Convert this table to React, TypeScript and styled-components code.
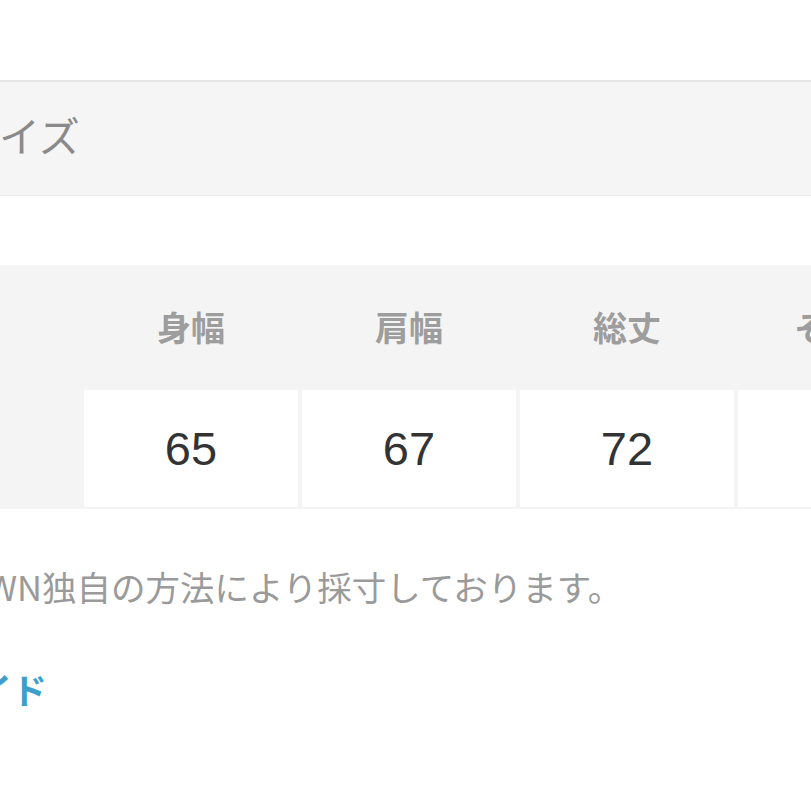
import React from "react"
import styled, { createGlobalStyle } from "styled-components"

const GlobalStyle = createGlobalStyle`
  html, body {
    margin: 0;
    padding: 0;
    background: #ffffff;
    overflow: hidden;
  }
  body {
    font-family: "Noto Sans CJK JP", "Noto Sans", sans-serif;
  }
`

const Page = styled.div`
  width: 1200px;
  margin-left: -134px;
`

const TitleBar = styled.div`
  margin-top: 80px;
  height: 116px;
  display: flex;
  align-items: center;
  padding: 0 0 10px 92px;
  box-sizing: border-box;
  background: #f5f5f5;
  border-top: 2px solid #e6e6e6;
  border-bottom: 1px solid #ededed;
`

const Title = styled.h2`
  margin: 0;
  font-size: 41px;
  font-weight: 400;
  color: #8a8a8a;
`

const SizeTable = styled.div`
  margin-top: 69px;
  display: grid;
  grid-template-columns: repeat(5, 214px);
  grid-template-rows: 123px 117px;
  column-gap: 4px;
  row-gap: 2px;
  padding-bottom: 2px;
  width: max-content;
  background: #f4f4f4;
`

const HeadCell = styled.div`
  display: flex;
  align-items: center;
  justify-content: center;
  font-size: 34px;
  font-weight: 700;
  color: #9d9d9d;
`

const Cell = styled.div<{ $label?: boolean }>`
  display: flex;
  align-items: center;
  justify-content: center;
  background: ${(p) => (p.$label ? "#f4f4f4" : "#ffffff")};
  font-family: "Liberation Sans", Arial, sans-serif;
  font-size: 47px;
  color: #333333;
`

const Note = styled.p`
  margin: 52px 0 0 -14px;
  font-size: 34.5px;
  line-height: 1.5;
  color: #9a9a9a;
`

const GuideLink = styled.a`
  display: block;
  margin: 50px 0 0 -28px;
  font-size: 35px;
  line-height: 1.5;
  font-weight: 700;
  color: #3d9fcb;
  text-decoration: none;
`

const heads = ["", "身幅", "肩幅", "総丈", "そで丈"]
const values = ["F", "65", "67", "72", "24"]

export default function App() {
  return (
    <>
      <GlobalStyle />
      <Page>
        <TitleBar>
          <Title>サイズ</Title>
        </TitleBar>
        <SizeTable>
          {heads.map((h, i) => (
            <HeadCell key={"h" + i}>{h}</HeadCell>
          ))}
          {values.map((v, i) => (
            <Cell key={"v" + i} $label={i === 0}>
              {v}
            </Cell>
          ))}
        </SizeTable>
        <Note>ZOZOTOWN独自の方法により採寸しております。</Note>
        <GuideLink href="#">サイズガイド</GuideLink>
      </Page>
    </>
  )
}
